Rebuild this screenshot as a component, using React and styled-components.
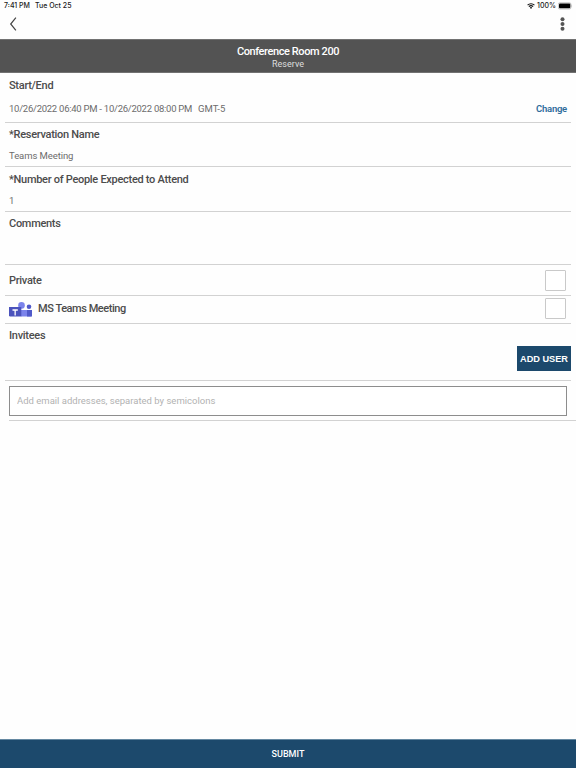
import React from 'react'
import styled, { createGlobalStyle } from 'styled-components'

const GlobalStyle = createGlobalStyle`
  * {
    box-sizing: border-box;
  }

  body {
    margin: 0;
    background: #fefefe;
    font-family: Roboto, "Liberation Sans", sans-serif;
    color: #4c4c4c;
  }
`

const Screen = styled.div`
  display: flex;
  flex-direction: column;
  width: 100%;
  height: 100vh;
  overflow: hidden;
`

const StatusBar = styled.div`
  display: flex;
  align-items: center;
  height: 12px;
  padding: 0 3px 0 4px;
  font-family: Inter, "Liberation Sans", sans-serif;
  font-size: 7px;
  font-weight: 500;
  line-height: 12px;
  color: #222;
`

const StatusDate = styled.span`
  flex: 1;
  margin-left: 5px;
`

const StatusIcon = styled.svg`
  display: block;
  margin-left: ${props => props.$gap || 0}px;
`

const Percent = styled.span`
  margin-left: 2px;
`

const NavBar = styled.nav`
  display: flex;
  align-items: center;
  justify-content: space-between;
  height: 27px;
  padding: 0 11px 3px 9px;
`

const IconButton = styled.button`
  display: block;
  padding: 0;
  border: 0;
  background: none;
  line-height: 0;
`

const Header = styled.header`
  height: 34px;
  padding-top: 5px;
  border-top: 1px solid #727272;
  border-bottom: 1px solid #727272;
  background: #535353;
  color: #fff;
  text-align: center;
`

const Title = styled.h1`
  margin: 0;
  font-size: 11px;
  font-weight: 500;
  line-height: 13px;
  letter-spacing: -0.4px;
`

const Subtitle = styled.div`
  font-size: 9px;
  line-height: 12px;
  color: #dedede;
`

const Form = styled.main`
  flex: 1;
  padding-left: 5px;
`

const Row = styled.section`
  display: flex;
  flex-direction: column;
  height: ${props => props.$height}px;
  margin-right: 5px;
  padding: ${props => props.$top || 5}px 4px 0;
  border-bottom: 1px solid #d2d2d2;
`

const CheckRow = styled(Row)`
  flex-direction: row;
  align-items: center;
  padding: 0 5px ${props => props.$lift || 0}px 4px;
`

const Label = styled.label`
  flex: ${props => (props.$grow ? 1 : 'none')};
  font-size: 11px;
  font-weight: 500;
  line-height: 13px;
  letter-spacing: ${props => props.$spacing || -0.29}px;
  white-space: nowrap;
`

const ValueLine = styled.div`
  display: flex;
  margin-top: ${props => props.$gap}px;
  font-size: 9.5px;
  line-height: 12px;
  color: #6c6c6c;
`

const Value = styled.span`
  letter-spacing: ${props => props.$spacing || 0}px;
`

const TimeZone = styled.span`
  flex: 1;
  margin-left: 6px;
`

const ChangeLink = styled.a`
  font-weight: 600;
  letter-spacing: -0.25px;
  color: #2e6d9c;
`

const Checkbox = styled.span`
  width: 21px;
  height: 21px;
  border: 1px solid #c9c9c9;
  border-radius: 1px;
  background: #fff;
`

const TeamsLogo = styled.svg`
  display: block;
  margin: 2px 6px 0 0;
`

const AddButton = styled.button`
  align-self: flex-end;
  width: 54px;
  height: 25px;
  margin: 4px -4px 0 0;
  padding: 0;
  border: 0;
  background: #1c496c;
  color: #fff;
  font: bold 9.2px "Liberation Sans", sans-serif;
  white-space: nowrap;
`

const EmailRow = styled.div`
  height: 40px;
  margin-left: 4px;
  padding: 5px 9px 0 0;
  border-bottom: 1px solid #d2d2d2;
`

const EmailInput = styled.input`
  display: block;
  width: 100%;
  height: 30px;
  padding: 0 7px 2px;
  border: 1px solid #8d8d8d;
  border-radius: 0;
  background: #fff;
  font: 9.5px Roboto, sans-serif;

  &::placeholder {
    color: #b2b2b2;
  }
`

const Submit = styled.button`
  height: 29px;
  padding: 0;
  border: 0;
  border-top: 1px solid #6488a1;
  background: #1c496c;
  color: #fff;
  font: 500 9px Roboto, sans-serif;
`

const App = () => {
  return (
    <Screen>
      <GlobalStyle />
      <StatusBar>
        <span>7:41 PM</span>
        <StatusDate>Tue Oct 25</StatusDate>
        <StatusIcon width="8" height="6" viewBox="0 0 8 6">
          <path d="M.6 2.2a4.9 4.9 0 0 1 6.8 0M1.9 3.6a3 3 0 0 1 4.2 0" fill="none" stroke="#111" strokeWidth="1.1" />
          <path d="M2.8 4.6a1.7 1.7 0 0 1 2.4 0L4 5.9z" fill="#111" />
        </StatusIcon>
        <Percent>100%</Percent>
        <StatusIcon $gap={2} width="15" height="8" viewBox="0 0 15 8">
          <rect x=".3" y=".8" width="12.7" height="6.2" rx="1.6" fill="#fff" stroke="#888" strokeWidth=".5" />
          <rect x="1" y="1.5" width="11.3" height="4.8" rx="1" fill="#000" />
          <path d="M13.6 2.9q1 1 0 2z" fill="#888" />
        </StatusIcon>
      </StatusBar>
      <NavBar>
        <IconButton aria-label="Back">
          <svg width="8" height="14" viewBox="0 0 8 14">
            <path d="M6.9.7 1.7 7l5.2 6.3" fill="none" stroke="#444" strokeWidth="1.2" />
          </svg>
        </IconButton>
        <IconButton aria-label="More">
          <svg width="5" height="14" viewBox="0 0 5 14">
            <circle cx="2.5" cy="2.2" r="2" fill="#555" />
            <circle cx="2.5" cy="7" r="2" fill="#555" />
            <circle cx="2.5" cy="11.8" r="2" fill="#555" />
          </svg>
        </IconButton>
      </NavBar>
      <Header>
        <Title>Conference Room 200</Title>
        <Subtitle>Reserve</Subtitle>
      </Header>
      <Form>
        <Row $height={50} $top={6}>
          <Label>Start/End</Label>
          <ValueLine $gap={11}>
            <Value $spacing={-0.26}>10/26/2022 06:40 PM - 10/26/2022 08:00 PM</Value>
            <TimeZone>GMT-5</TimeZone>
            <ChangeLink>Change</ChangeLink>
          </ValueLine>
        </Row>
        <Row $height={44}>
          <Label>*Reservation Name</Label>
          <ValueLine $gap={9}>
            <Value $spacing={-0.08}>Teams Meeting</Value>
          </ValueLine>
        </Row>
        <Row $height={45} $top={6}>
          <Label>*Number of People Expected to Attend</Label>
          <ValueLine $gap={9}>
            <Value>1</Value>
          </ValueLine>
        </Row>
        <Row $height={53}>
          <Label>Comments</Label>
        </Row>
        <CheckRow $height={31}>
          <Label $grow>Private</Label>
          <Checkbox />
        </CheckRow>
        <CheckRow $height={28} $lift={3}>
          <TeamsLogo width="23" height="15" viewBox="0 0 23 15">
            <circle cx="12.5" cy="3.4" r="3.3" fill="#7b83eb" />
            <circle cx="20" cy="4.7" r="2.3" fill="#5059c9" />
            <path d="M12 8h11v6.5H12z" fill="#7b83eb" />
            <path d="M18 8h5v5.4q0 1.1-1.2 1.1H18z" fill="#5059c9" />
            <path d="M0 5h12.3v9.5H1.2Q0 14.5 0 13.3z" fill="#4b53bc" />
            <path d="M3.5 8h5.3M6.150 8v5.6" fill="none" stroke="#fff" strokeWidth="1.3" />
          </TeamsLogo>
          <Label $grow $spacing={-0.45}>MS Teams Meeting</Label>
          <Checkbox />
        </CheckRow>
        <Row $height={57}>
          <Label>Invitees</Label>
          <AddButton>ADD USER</AddButton>
        </Row>
        <EmailRow>
          <EmailInput placeholder="Add email addresses, separated by semicolons" />
        </EmailRow>
      </Form>
      <Submit>SUBMIT</Submit>
    </Screen>
  )
}

export default App
